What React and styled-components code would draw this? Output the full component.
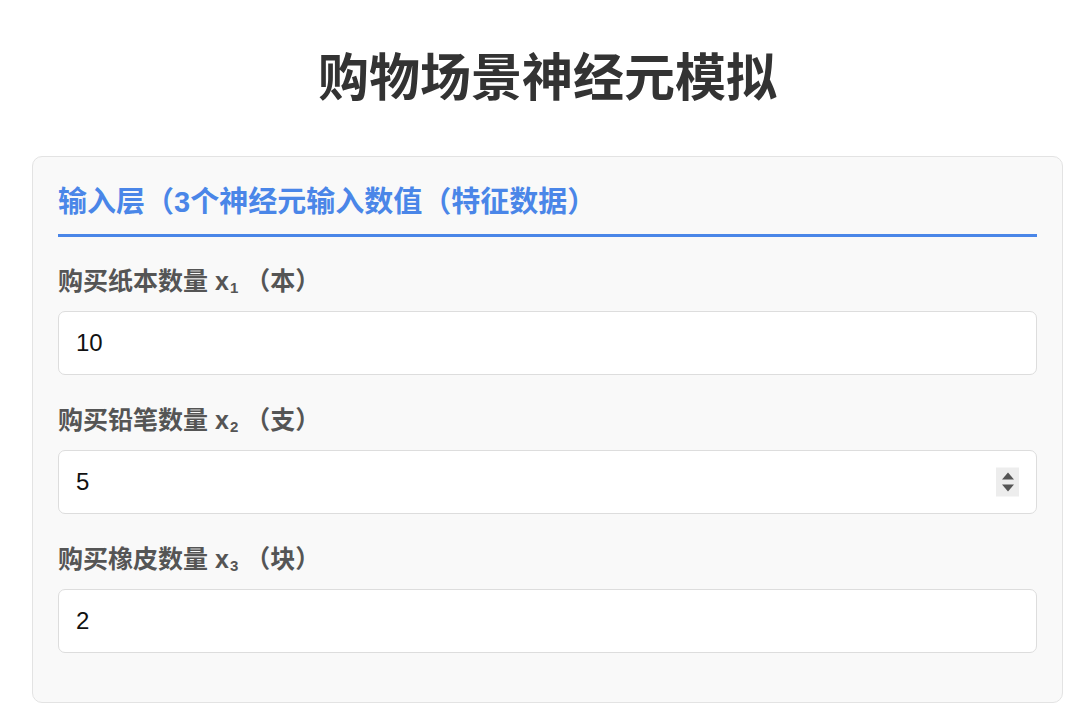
import styled, { createGlobalStyle } from "styled-components";

const GlobalStyle = createGlobalStyle`
  * {
    box-sizing: border-box;
  }
  body {
    margin: 0;
    background: #ffffff;
    font-family: "Liberation Sans", "Noto Sans CJK SC", sans-serif;
  }
`;

const fields = [
  { id: "x1", name: "购买纸本数量", sub: "1", unit: "本", value: "10" },
  { id: "x2", name: "购买铅笔数量", sub: "2", unit: "支", value: "5", spinner: true },
  { id: "x3", name: "购买橡皮数量", sub: "3", unit: "块", value: "2" },
];

const App = () => {
  return (
    <Page>
      <GlobalStyle />
      <Title>购物场景神经元模拟</Title>
      <Card>
        <SectionTitle>输入层（3个神经元输入数值（特征数据）</SectionTitle>
        {fields.map((f) => (
          <Field key={f.id}>
            <Label htmlFor={f.id}>
              {f.name} x<sub>{f.sub}</sub> （{f.unit}）
            </Label>
            <InputWrap>
              <Input id={f.id} type="text" defaultValue={f.value} />
              {f.spinner && (
                <Spinner>
                  <ArrowUp />
                  <ArrowDown />
                </Spinner>
              )}
            </InputWrap>
          </Field>
        ))}
      </Card>
    </Page>
  );
};

export default App;

const Page = styled.div`
  padding: 45px 17px 0 32px;
`;

const Title = styled.h1`
  margin: 0 0 43px;
  text-align: center;
  font-size: 51px;
  line-height: 68px;
  font-weight: 700;
  color: #333333;
`;

const Card = styled.div`
  background: #f9f9f9;
  border: 1.5px solid #e3e3e3;
  border-radius: 10px;
  padding: 27px 25px 18px;
  min-height: 547px;
`;

const SectionTitle = styled.h2`
  margin: 0 0 29px;
  padding-bottom: 14px;
  border-bottom: 3px solid #4a86e8;
  font-size: 29px;
  line-height: 36px;
  font-weight: 700;
  color: #4a86e8;
`;

const Field = styled.div`
  display: flex;
  flex-direction: column;
  gap: 15px;
  margin-bottom: 30px;
`;

const Label = styled.label`
  font-size: 25px;
  line-height: 30px;
  font-weight: 700;
  color: #555555;

  sub {
    font-size: 15px;
    vertical-align: -3px;
    line-height: 0;
    margin-left: 1px;
  }
`;

const InputWrap = styled.div`
  position: relative;
`;

const Input = styled.input`
  display: block;
  width: 100%;
  height: 64px;
  padding: 0 17px;
  border: 1.5px solid #dddddd;
  border-radius: 7px;
  background: #ffffff;
  font-family: "Liberation Sans", "Noto Sans CJK SC", sans-serif;
  font-size: 24px;
  color: #111111;
  outline: none;
`;

const Spinner = styled.div`
  position: absolute;
  right: 18px;
  top: 50%;
  transform: translateY(-50%);
  width: 23px;
  height: 29px;
  background: #ededed;
  display: flex;
  flex-direction: column;
  align-items: center;
  justify-content: center;
  gap: 5px;
`;

const ArrowUp = styled.span`
  width: 0;
  height: 0;
  border-left: 6px solid transparent;
  border-right: 6px solid transparent;
  border-bottom: 7px solid #555555;
`;

const ArrowDown = styled.span`
  width: 0;
  height: 0;
  border-left: 6px solid transparent;
  border-right: 6px solid transparent;
  border-top: 7px solid #555555;
`;
